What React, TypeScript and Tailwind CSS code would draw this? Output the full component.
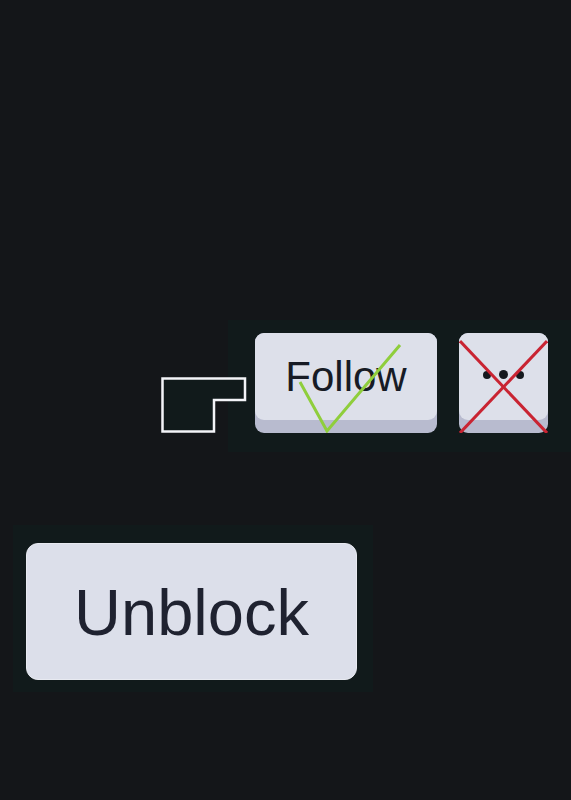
import { ReactNode } from 'react';

// Raised key-style button: light face sitting on a darker base strip
function KeyButton({ width, children }: { width: string; children: ReactNode }) {
  return (
    <div className={`relative h-[100px] ${width} rounded-[9px] bg-[#b8bbcf]`}>
      <div className="h-[87px] rounded-[9px] bg-[#dde0ea] flex items-center justify-center">
        {children}
      </div>
    </div>
  );
}

export default function App() {
  return (
    <div
      className="h-[800px] w-full bg-[#141619] overflow-hidden"
      style={{ fontFamily: '"Liberation Sans", Arial, sans-serif' }}
    >
      <div className="h-[320px]" />

      {/* Follow row */}
      <div className="ml-[228px] relative bg-[#111a1b] h-[132px] pl-[27px] pt-[13px] flex gap-[22px]">
        {/* outline marker hanging off the left edge */}
        <svg
          className="absolute left-[-67px] top-[57px]"
          width="86"
          height="56"
          viewBox="0 0 86 56"
        >
          <path
            d="M1.5 1.5 H84 V23 H53 V54.5 H1.5 Z"
            fill="#111a1b"
            stroke="#f3f4f8"
            strokeWidth="2.5"
          />
        </svg>

        <KeyButton width="w-[182px]">
          <span className="text-[42px] leading-none text-[#171b25] mt-[1px]">Follow</span>
          <svg className="absolute left-0 top-0" width="182" height="100" viewBox="0 0 182 100">
            <polyline
              points="45,49 72,98 145,12"
              fill="none"
              stroke="#8fce3c"
              strokeWidth="3"
            />
          </svg>
        </KeyButton>

        <KeyButton width="w-[89px]">
          <div className="flex items-center gap-[8px] -mt-[4px]">
            <span className="w-[8px] h-[8px] rounded-full bg-[#15191e]" />
            <span className="w-[9px] h-[9px] rounded-full bg-[#15191e]" />
            <span className="w-[8px] h-[8px] rounded-full bg-[#15191e]" />
          </div>
          <svg className="absolute left-0 top-0" width="89" height="100" viewBox="0 0 89 100">
            <line x1="1" y1="8" x2="88" y2="100" stroke="#c92432" strokeWidth="3" />
            <line x1="88" y1="8" x2="1" y2="100" stroke="#c92432" strokeWidth="3" />
          </svg>
        </KeyButton>
      </div>

      <div className="h-[73px]" />

      {/* Unblock row */}
      <div className="ml-[13px] w-[360px] bg-[#111a1b] pl-[13px] pt-[18px] pb-[12px]">
        <div className="w-[331px] h-[137px] rounded-[12px] bg-[#dcdfea] border border-[#e8eaf1] flex items-center justify-center">
          <span className="text-[65px] leading-none text-[#1f2230] mt-[2px]">Unblock</span>
        </div>
      </div>
    </div>
  );
}
